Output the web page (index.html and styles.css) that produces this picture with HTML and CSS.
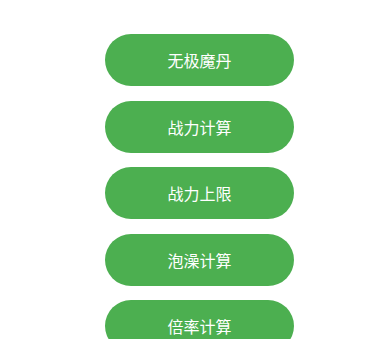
FILE: index.html
```html
<!DOCTYPE html>
<html lang="zh">
<head>
<meta charset="utf-8">
<link rel="stylesheet" href="styles.css">
</head>
<body>
<div class="menu">
  <button class="btn">无极魔丹</button>
  <button class="btn">战力计算</button>
  <button class="btn">战力上限</button>
  <button class="btn">泡澡计算</button>
  <button class="btn">倍率计算</button>
</div>
</body>
</html>
```
FILE: styles.css
```css
html, body {
  margin: 0;
  padding: 0;
  background: #ffffff;
  overflow: hidden;
}
.menu {
  display: flex;
  flex-direction: column;
  gap: 14.5px;
  padding-top: 34px;
  padding-left: 105px;
}
.btn {
  width: 189px;
  height: 52px;
  border: none;
  border-radius: 26px;
  background: #4caf50;
  color: #ffffff;
  font-family: "Noto Sans CJK SC", "Noto Sans", sans-serif;
  font-size: 16px;
  padding: 0;
  margin: 0;
  flex: none;
}
```
